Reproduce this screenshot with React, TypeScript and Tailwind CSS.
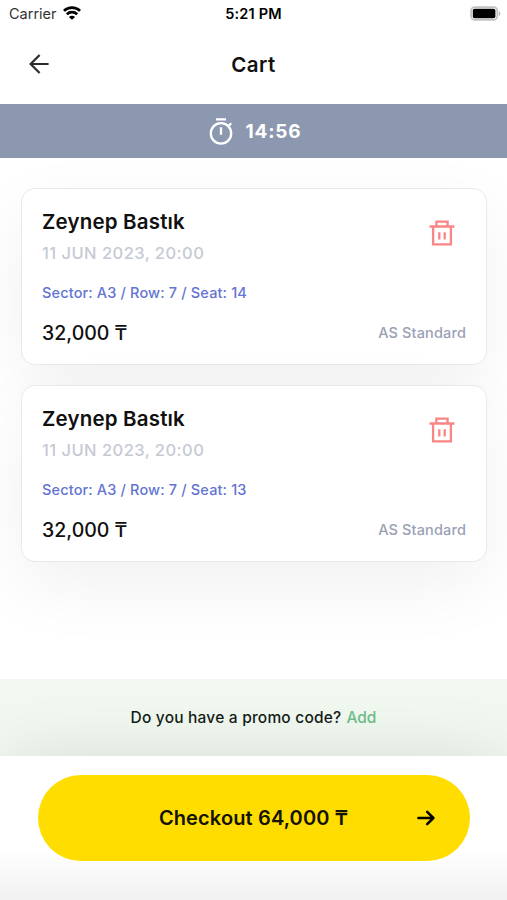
import React from 'react';

interface Ticket {
  id: number;
  title: string;
  date: string;
  place: string;
  price: string;
  category: string;
}

const tickets: Ticket[] = [
  {
    id: 1,
    title: 'Zeynep Bastık',
    date: '11 JUN 2023, 20:00',
    place: 'Sector: A3 / Row: 7 / Seat: 14',
    price: '32,000 ₸',
    category: 'AS Standard',
  },
  {
    id: 2,
    title: 'Zeynep Bastık',
    date: '11 JUN 2023, 20:00',
    place: 'Sector: A3 / Row: 7 / Seat: 13',
    price: '32,000 ₸',
    category: 'AS Standard',
  },
];

const WifiIcon = () => (
  <svg className="-mt-[2px]" width="18" height="14" viewBox="0 0 18 14" fill="none" stroke="#000" strokeWidth="2.7">
    <path d="M0.9 4.9C5.4 0.5 12.6 0.5 17.1 4.9" />
    <path d="M3.8 8.2C6.7 5.4 11.3 5.4 14.2 8.2" />
    <path d="M9 13.8L5.9 10.9C7.6 9.3 10.4 9.3 12.1 10.9Z" fill="#000" stroke="none" />
  </svg>
);

const BatteryIcon = () => (
  <svg className="-mt-[2px]" width="31" height="15" viewBox="0 0 31 15" fill="none">
    <rect x="1.1" y="1.1" width="26.2" height="12.8" rx="3.8" stroke="#c2c2c2" strokeWidth="1.8" />
    <rect x="2.8" y="2.8" width="22.6" height="9.4" rx="1.8" fill="#000" />
    <path d="M28.8 5.2C30.8 5.9 30.8 9.1 28.8 9.8Z" fill="#b5b5b5" />
  </svg>
);

const BackIcon = () => (
  <svg width="20" height="20" viewBox="0 0 20 20" fill="none" stroke="#2b2b2b" strokeWidth="2.2">
    <path d="M19.6 10H2M10.6 1L1.6 10L10.6 19" />
  </svg>
);

const TimerIcon = () => (
  <svg width="24" height="27" viewBox="0 0 24 27" fill="none" stroke="#fff" strokeWidth="2.3">
    <circle cx="12" cy="15.4" r="10.2" />
    <path d="M7 1.4H17M12 9.2V16.8M19.2 8.2L22.2 5.2" />
  </svg>
);

const TrashIcon = () => (
  <svg width="26" height="26" viewBox="0 0 26 26" fill="none" stroke="#fa8585" strokeWidth="2.3">
    <path d="M0.6 6.5H25.4M7.4 6.5V1.7H18.6V6.5M4.1 6.5V24.3H21.9V6.5M10.3 12.2V19.4M15.7 12.2V19.4" />
  </svg>
);

const TicketCard: React.FC<{ ticket: Ticket }> = ({ ticket }) => (
  <div className="relative flex h-[177px] flex-col rounded-[14px] border border-[#e9e9ea] bg-white px-5 pt-[19px] shadow-[0_24px_70px_rgba(0,0,0,0.06)]">
    <div className="flex justify-between">
      <div>
        <h2 className="text-[20.5px] leading-[28px] font-semibold tracking-[0.18px] text-[#101010]">{ticket.title}</h2>
        <p className="mt-[5px] text-[16.5px] leading-[24px] font-medium tracking-[0.46px] text-[#c6cad3]">{ticket.date}</p>
      </div>
      <button className="mt-[12px] mr-[11px] h-[26px]">
        <TrashIcon />
      </button>
    </div>
    <p className="mt-[18px] text-[14.5px] leading-[20px] font-medium tracking-[0.15px] text-[#6374d2]">{ticket.place}</p>
    <div className="mt-[16px] flex items-center justify-between">
      <span className="text-[19.5px] leading-[28px] font-medium text-[#101010]">{ticket.price}</span>
      <span className="text-[14.5px] leading-[20px] font-medium tracking-[0.14px] text-[#9aa1b5]">{ticket.category}</span>
    </div>
  </div>
);

const App: React.FC = () => {
  return (
    <div className="flex h-[900px] w-[507px] flex-col overflow-hidden bg-white font-[Inter,sans-serif]">
      <div className="grid h-[28px] shrink-0 grid-cols-3 items-center pr-[6px] pl-[9px] text-black">
        <div className="flex items-center gap-[6px]">
          <span className="text-[14.5px] text-[#333]">Carrier</span>
          <WifiIcon />
        </div>
        <span className="-ml-[3px] text-center text-[14.5px] font-semibold tracking-[0.2px]">5:21 PM</span>
        <div className="flex justify-end">
          <BatteryIcon />
        </div>
      </div>

      <header className="grid h-[76px] shrink-0 grid-cols-3 items-center px-[29px] pb-1">
        <button className="w-5">
          <BackIcon />
        </button>
        <h1 className="pt-[2px] text-center text-[20.5px] font-semibold tracking-[0.5px] text-[#101010]">Cart</h1>
      </header>

      <div className="relative z-10 flex h-[54px] shrink-0 items-center justify-center gap-[13px] bg-[#8c98af] pl-[3px] text-white">
        <TimerIcon />
        <span className="pt-[2px] text-[19px] font-bold tracking-[0.8px]">14:56</span>
      </div>

      <main className="flex grow flex-col gap-5 pt-[30px] pr-5 pl-[21px]">
        {tickets.map((ticket) => (
          <TicketCard key={ticket.id} ticket={ticket} />
        ))}
      </main>

      <div className="relative flex h-[77px] shrink-0 items-center justify-center gap-[5px] bg-[#f0f8f0] text-[15.5px] font-medium">
        <span className="tracking-[0.2px] text-[#161c18]">Do you have a promo code?</span>
        <button className="text-[#6fbe8a]">Add</button>
      </div>

      <footer className="relative h-[144px] shrink-0 bg-linear-to-b from-white from-65% to-[#f1f1f2] px-[37.5px] pt-[19px] shadow-[0_5px_75px_-5px_rgba(0,0,0,0.14)] [clip-path:inset(-77px_0_0_0)]">
        <button className="relative flex h-[86px] w-full items-center justify-center rounded-full bg-[#ffdd00] text-[20px] font-semibold tracking-[0.13px] text-[#141200]">
          Checkout 64,000 ₸
          <svg
            className="absolute right-[35px]"
            width="18"
            height="16"
            viewBox="0 0 18 16"
            fill="none"
            stroke="#000"
            strokeWidth="2.5"
            strokeLinecap="round"
            strokeLinejoin="round"
          >
            <path d="M1.4 8H16.4M10.2 1.8L16.4 8L10.2 14.2" />
          </svg>
        </button>
      </footer>
    </div>
  );
};

export default App;
